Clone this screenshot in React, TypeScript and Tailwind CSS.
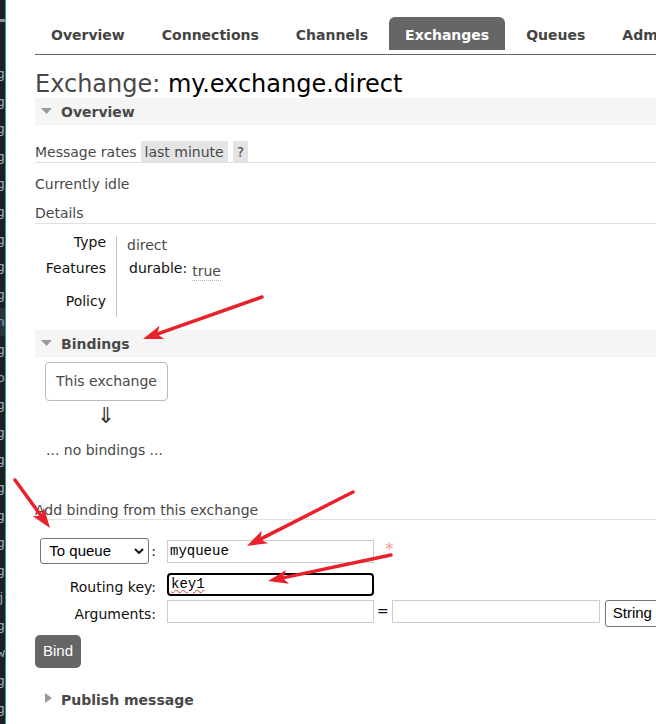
import React from "react";

const RED = "#e8212b";

const Arrow = ({ x1, y1, x2, y2 }: { x1: number; y1: number; x2: number; y2: number }) => {
  const dx = x2 - x1;
  const dy = y2 - y1;
  const len = Math.hypot(dx, dy);
  const ux = dx / len;
  const uy = dy / len;
  const hl = 20;
  const hw = 7;
  const bx = x2 - ux * hl;
  const by = y2 - uy * hl;
  const px = -uy;
  const py = ux;
  const pts = `${x2},${y2} ${bx + px * hw},${by + py * hw} ${bx + ux * 5},${by + uy * 5} ${bx - px * hw},${by - py * hw}`;
  return (
    <g>
      <line x1={x1} y1={y1} x2={bx + ux * 6} y2={by + uy * 6} stroke={RED} strokeWidth={3.5} strokeLinecap="round" />
      <polygon points={pts} fill={RED} />
    </g>
  );
};

const DownTriangle = () => (
  <svg width="11" height="6" viewBox="0 0 11 6" className="mt-[10px] shrink-0">
    <polygon points="0,0 11,0 5.5,6" fill="#999" />
  </svg>
);

const SectionBar = ({ title }: { title: string }) => (
  <div className="h-[27px] bg-[#f5f5f5] flex items-start pl-[6px] gap-[9px]">
    <DownTriangle />
    <span className="mt-[6px] leading-[17px] font-bold text-[#484848]">{title}</span>
  </div>
);

const gutter = ["g", "g", "g", "g", "g", "g", "g", "g", "g", "n", "g", "b", "g", "g", "g", "g", "g", "g", "g", "j", "g", "w", "g", "g"];

const Sidebar = () => (
  <div className="w-[6px] shrink-0 h-full bg-[#1e1f22] border-r border-[#23a393] overflow-hidden">
    <div className="mt-[19px] h-[3px] w-[5px] bg-[#8b8f96]" />
    <div className="pt-[38px] flex flex-col font-['DejaVu_Sans_Mono',monospace] text-[13px] text-[#a3aab5]">
      {gutter.map((c, i) => (
        <div key={i} className={i === 9 ? "h-[27.6px] leading-[27.6px] -ml-[3px] bg-[#2e3138] text-[#8aa0d8]" : "h-[27.6px] leading-[27.6px] -ml-[3px]"}>
          {c}
        </div>
      ))}
    </div>
  </div>
);

const tabs = ["Overview", "Connections", "Channels", "Exchanges", "Queues", "Admin"];

export default function App() {
  return (
    <div className="relative flex w-[656px] h-[724px] overflow-hidden bg-white font-['DejaVu_Sans',sans-serif] text-[14px] text-[#484848]">
      <Sidebar />
      <main className="pl-[29px] w-[760px] shrink-0">
        <nav className="pt-[17px] pb-[4px] border-b border-[#666] flex gap-[5px]">
          {tabs.map((t) => (
            <div
              key={t}
              className={
                t === "Exchanges"
                  ? "h-[33px] px-4 pt-[3px] flex items-center font-bold rounded-t-[6px] bg-[#666] text-white"
                  : "h-[33px] px-4 pt-[3px] flex items-center font-bold rounded-t-[6px] text-[#444]"
              }
            >
              {t}
            </div>
          ))}
        </nav>

        <h1 className="mt-[15px] text-[24px] leading-[28px] text-[#484848]">
          Exchange: <span className="text-black">my.exchange.direct</span>
        </h1>

        <SectionBar title="Overview" />

        <div className="mt-[16px] flex items-center border-b border-[#e0e0e0]">
          <span className="leading-[17px] pt-[1px]">Message rates</span>
          <span className="ml-[4px] px-[4px] pt-[3px] pb-[1px] leading-[17px] bg-[#e4e4e4]">last minute</span>
          <span className="ml-[5px] px-[4px] pt-[3px] pb-[1px] leading-[17px] bg-[#e4e4e4]">?</span>
        </div>

        <div className="mt-[13px] leading-[17px]">Currently idle</div>
        <div className="mt-[12px] leading-[17px] pb-[1px] border-b border-[#e0e0e0]">Details</div>

        <div className="mt-[10px] flex items-start">
          <div className="w-[71px] flex flex-col text-right leading-[17px] text-[#111]">
            <span>Type</span>
            <span className="mt-[9px]">Features</span>
            <span className="mt-[16px]">Policy</span>
          </div>
          <div className="ml-[10px] mt-[2px] w-px h-[81px] bg-[#c4c4c4]" />
          <div className="pl-[10px] flex flex-col leading-[17px]">
            <span className="mt-[3px]">direct</span>
            <div className="mt-[6px] ml-[2px] flex items-start">
              <span className="text-[#111]">durable:</span>
              <span className="ml-[5px] mt-[3px] border-b border-dotted border-[#bbb]">true</span>
            </div>
          </div>
        </div>

        <div className="mt-[13px]">
          <SectionBar title="Bindings" />
        </div>

        <div className="mt-[5px] ml-[10px] w-fit border border-[#bbb] rounded-[4px] px-[10px] py-[10px] leading-[17px]">
          This exchange
        </div>
        <div className="mt-[3px] ml-[10px] w-[122px] text-center text-[22px] leading-[24px] text-[#333]">⇓</div>
        <div className="mt-[14px] ml-[11px] leading-[17px]">... no bindings ...</div>

        <div className="mt-[42px] leading-[18px] border-b border-[#e0e0e0]">Add binding from this exchange</div>

        <div className="mt-[18px] flex items-start">
          <div className="w-[121px] h-[26px] flex justify-end items-center gap-[2px]">
            <div className="w-[109px] h-[26px] border border-[#767676] rounded-[3px] flex items-center justify-between pl-[8px] pr-[4px] font-['Liberation_Sans',sans-serif] text-[15px] text-black">
              <span>To queue</span>
              <svg width="10" height="6" viewBox="0 0 10 6">
                <polyline points="1,1 5,5 9,1" fill="none" stroke="#111" strokeWidth="2" />
              </svg>
            </div>
            <span className="text-[#111]">:</span>
          </div>
          <div className="ml-[11px] mt-[2px] w-[207px] h-[23px] border border-[#ccc] pl-[2px] flex items-center font-['Liberation_Mono',monospace] text-[14px] text-black">
            myqueue
          </div>
          <span className="ml-[11px] mt-[2px] text-[17px] leading-[18px] text-[#f99]">*</span>
        </div>

        <div className="mt-[9px] flex items-start">
          <div className="w-[121px] pt-[6px] text-right leading-[17px] text-[#111]">Routing key:</div>
          <div className="ml-[11px] w-[207px] h-[23px] border-2 border-black rounded-[4px] pl-[2px] flex items-center font-['Liberation_Mono',monospace] text-[14px] text-black">
            <span className="underline decoration-wavy decoration-[#e33] decoration-1 underline-offset-[1px]">key1</span>
          </div>
        </div>

        <div className="mt-[4px] flex items-start">
          <div className="w-[121px] pt-[6px] text-right leading-[17px] text-[#111]">Arguments:</div>
          <div className="ml-[11px] w-[207px] h-[23px] border border-[#ccc]" />
          <span className="mx-[3px] pt-[3px] leading-[17px] text-[#111]">=</span>
          <div className="w-[208px] h-[23px] border border-[#ccc]" />
          <div className="ml-[5px] w-[80px] h-[27px] border border-[#767676] rounded-[3px] pl-[7px] flex items-center font-['Liberation_Sans',sans-serif] text-[15px] text-black">
            String
          </div>
        </div>

        <div className="mt-[8px] w-fit h-[33px] px-[8px] flex items-center bg-[#666] text-white rounded-[5px] font-['Liberation_Sans',sans-serif] text-[15px]">
          Bind
        </div>

        <div className="mt-[24px] pl-[10px] flex items-start gap-[9px]">
          <svg width="7" height="10" viewBox="0 0 7 10" className="mt-[1px] shrink-0">
            <polygon points="0,0 7,5 0,10" fill="#999" />
          </svg>
          <span className="leading-[17px] font-bold text-[#484848]">Publish message</span>
        </div>
      </main>

      <svg className="absolute inset-0 pointer-events-none" width="656" height="724" viewBox="0 0 656 724">
        <Arrow x1={262} y1={297} x2={143} y2={339} />
        <Arrow x1={15} y1={480} x2={50} y2={528} />
        <Arrow x1={353} y1={492} x2={247} y2={546} />
        <Arrow x1={391} y1={555} x2={268} y2={581} />
      </svg>
    </div>
  );
}
